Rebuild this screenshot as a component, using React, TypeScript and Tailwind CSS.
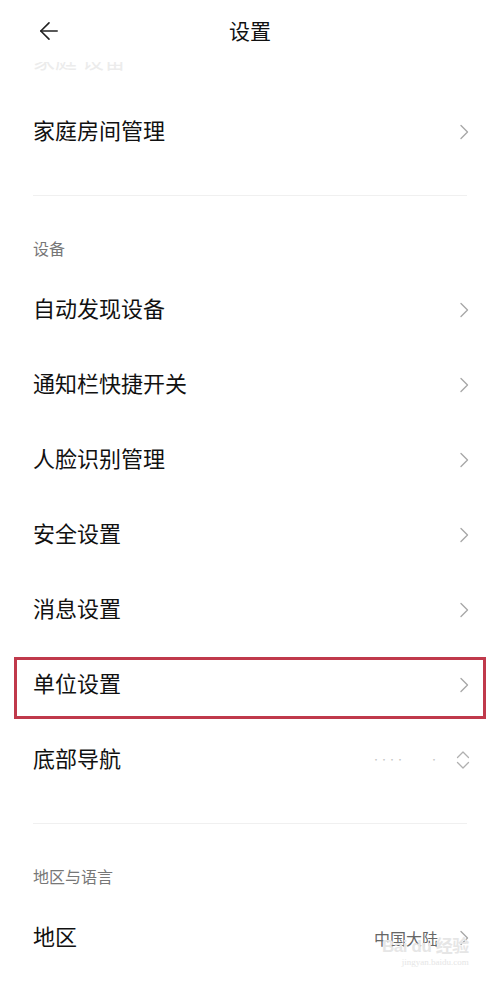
import { ArrowLeft } from "lucide-react";

const font = { fontFamily: '"Noto Sans CJK SC", "Noto Sans", sans-serif' };

function Chevron() {
  return (
    <svg width="12" height="16" viewBox="0 0 12 16" fill="none" className="shrink-0">
      <path d="M3 1.5 L9.5 8 L3 14.5" stroke="#a8a8a8" strokeWidth="1.4" strokeLinecap="round" strokeLinejoin="round" />
    </svg>
  );
}

function UpDown() {
  return (
    <svg width="14" height="20" viewBox="0 0 14 20" fill="none" className="shrink-0">
      <path d="M1.5 7.5 L7 2 L12.5 7.5" stroke="#b0b0b0" strokeWidth="1.3" strokeLinecap="round" strokeLinejoin="round" />
      <path d="M1.5 12.5 L7 18 L12.5 12.5" stroke="#b0b0b0" strokeWidth="1.3" strokeLinecap="round" strokeLinejoin="round" />
    </svg>
  );
}

function Row({ label, right, highlight }: { label: string; right?: React.ReactNode; highlight?: boolean }) {
  return (
    <div className="relative flex items-center h-[75px] pl-[33px] pr-[30px]">
      <span className="flex-1 text-[22px] text-[#111] leading-none pb-[5px]">{label}</span>
      {right ?? <Chevron />}
      {highlight && (
        <div className="absolute left-[14px] right-[14px] top-[10px] bottom-[3px] border-[3px] border-[#c0394b] pointer-events-none" />
      )}
    </div>
  );
}

function Section({ title }: { title: string }) {
  return (
    <div className="flex items-end h-[76px] pl-[33px] pb-[16px]">
      <span className="text-[16px] text-[#777] leading-none">{title}</span>
    </div>
  );
}

function Divider() {
  return (
    <div className="h-[27px] flex items-end">
      <div className="mx-[33px] w-full border-t border-[#f0f0f0]" />
    </div>
  );
}

const devices = ["自动发现设备", "通知栏快捷开关", "人脸识别管理", "安全设置", "消息设置"];

export default function App() {
  return (
    <div className="w-[500px] h-[981px] bg-white overflow-hidden" style={font}>
      {/* Header */}
      <div className="relative flex items-center justify-center h-[62px]">
        <ArrowLeft className="absolute left-[34px] top-[17px] w-[30px] h-[28px] text-[#222]" strokeWidth={1.4} />
        <span className="text-[21px] text-[#111]">设置</span>
      </div>

      {/* row cut off under the header */}
      <div className="h-[12px] overflow-hidden pl-[33px]">
        <div className="-mt-[15px] text-[22px] leading-none text-[#ececec]">家庭 设备</div>
      </div>

      <div className="h-[20px]" />
      <Row label="家庭房间管理" />
      <Divider />

      <Section title="设备" />
      {devices.map((d) => (
        <Row key={d} label={d} />
      ))}
      <Row label="单位设置" highlight />
      <Row
        label="底部导航"
        right={
          <div className="flex items-center gap-[18px]">
            <div className="flex items-center gap-[26px] text-[8px] text-[#c4c4c4] leading-none">
              <span>····</span>
              <span>·</span>
            </div>
            <UpDown />
          </div>
        }
      />
      <Divider />

      <Section title="地区与语言" />
      <Row
        label="地区"
        right={
          <div className="relative flex items-center gap-[20px]">
            <span className="text-[16px] text-[#666] leading-none">中国大陆</span>
            <Chevron />
            <div className="absolute left-[8px] top-[8px] flex flex-col items-end text-[#e6e6e6] leading-none pointer-events-none whitespace-nowrap">
              <span className="text-[17px] font-bold tracking-tight" style={{ fontFamily: '"Liberation Sans", "Noto Sans CJK SC", sans-serif' }}>Bai du 经验</span>
              <span className="text-[9px] mt-[3px]" style={{ fontFamily: '"Liberation Serif", serif' }}>jingyan.baidu.com</span>
            </div>
          </div>
        }
      />
    </div>
  );
}
